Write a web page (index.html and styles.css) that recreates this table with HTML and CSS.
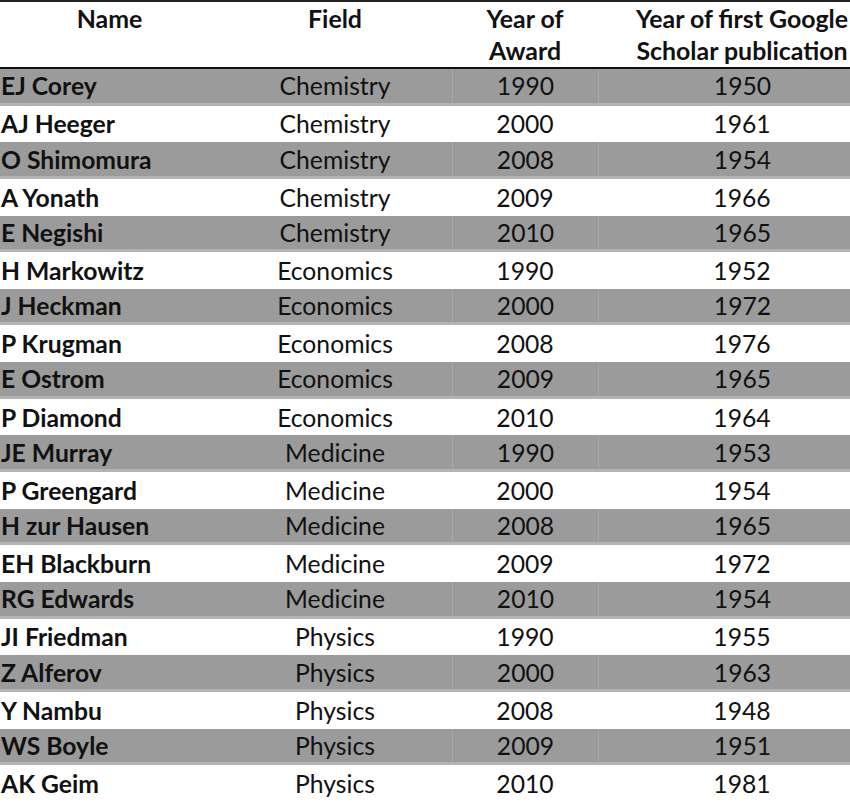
FILE: index.html
```html
<!DOCTYPE html>
<html>
<head>
<meta charset="utf-8">
<link rel="stylesheet" href="styles.css">
</head>
<body>
<div class="table">
  <div class="row head">
    <div class="c name">Name</div>
    <div class="c">Field</div>
    <div class="c">Year of<br>Award</div>
    <div class="c">Year of first Google<br>Scholar publication</div>
  </div>
  <div class="row g"><div class="c name">EJ Corey</div><div class="c">Chemistry</div><div class="c">1990</div><div class="c">1950</div></div>
  <div class="row"><div class="c name">AJ Heeger</div><div class="c">Chemistry</div><div class="c">2000</div><div class="c">1961</div></div>
  <div class="row g"><div class="c name">O Shimomura</div><div class="c">Chemistry</div><div class="c">2008</div><div class="c">1954</div></div>
  <div class="row"><div class="c name">A Yonath</div><div class="c">Chemistry</div><div class="c">2009</div><div class="c">1966</div></div>
  <div class="row g"><div class="c name">E Negishi</div><div class="c">Chemistry</div><div class="c">2010</div><div class="c">1965</div></div>
  <div class="row"><div class="c name">H Markowitz</div><div class="c">Economics</div><div class="c">1990</div><div class="c">1952</div></div>
  <div class="row g"><div class="c name">J Heckman</div><div class="c">Economics</div><div class="c">2000</div><div class="c">1972</div></div>
  <div class="row"><div class="c name">P Krugman</div><div class="c">Economics</div><div class="c">2008</div><div class="c">1976</div></div>
  <div class="row g"><div class="c name">E Ostrom</div><div class="c">Economics</div><div class="c">2009</div><div class="c">1965</div></div>
  <div class="row"><div class="c name">P Diamond</div><div class="c">Economics</div><div class="c">2010</div><div class="c">1964</div></div>
  <div class="row g"><div class="c name">JE Murray</div><div class="c">Medicine</div><div class="c">1990</div><div class="c">1953</div></div>
  <div class="row"><div class="c name">P Greengard</div><div class="c">Medicine</div><div class="c">2000</div><div class="c">1954</div></div>
  <div class="row g"><div class="c name">H zur Hausen</div><div class="c">Medicine</div><div class="c">2008</div><div class="c">1965</div></div>
  <div class="row"><div class="c name">EH Blackburn</div><div class="c">Medicine</div><div class="c">2009</div><div class="c">1972</div></div>
  <div class="row g"><div class="c name">RG Edwards</div><div class="c">Medicine</div><div class="c">2010</div><div class="c">1954</div></div>
  <div class="row"><div class="c name">JI Friedman</div><div class="c">Physics</div><div class="c">1990</div><div class="c">1955</div></div>
  <div class="row g"><div class="c name">Z Alferov</div><div class="c">Physics</div><div class="c">2000</div><div class="c">1963</div></div>
  <div class="row"><div class="c name">Y Nambu</div><div class="c">Physics</div><div class="c">2008</div><div class="c">1948</div></div>
  <div class="row g"><div class="c name">WS Boyle</div><div class="c">Physics</div><div class="c">2009</div><div class="c">1951</div></div>
  <div class="row"><div class="c name">AK Geim</div><div class="c">Physics</div><div class="c">2010</div><div class="c">1981</div></div>
</div>
</body>
</html>
```
FILE: styles.css
```css
html, body {
  margin: 0;
  padding: 0;
  background: #fff;
  overflow: hidden;
}
body {
  font-family: Lato, "Open Sans", sans-serif;
  font-size: 24.7px;
  color: #111;
}
.table {
  width: 886px;
  border-top: 2px solid #222;
}
.row {
  display: grid;
  grid-template-columns: 218px 234px 146px 288px;
  height: 36.65px;
  align-items: center;
  box-sizing: border-box;
}
.row.head {
  height: 67px;
  align-items: start;
  border-bottom: 2px solid #111;
  font-weight: bold;
  font-size: 24.9px;
  line-height: 32px;
}
.row.g {
  background: #9b9b9b;
  border-bottom: 3px solid #b3b3b3;
}
.row.g .c + .c + .c {
  border-left: 1px solid #a8a8a8;
}
.c {
  text-align: center;
  white-space: nowrap;
  height: 100%;
  display: flex;
  align-items: center;
  justify-content: center;
}
.head .c {
  display: block;
  height: auto;
}
.c.name {
  justify-content: flex-start;
  text-align: left;
  font-weight: bold;
  padding-left: 1px;
}
.head .c.name {
  text-align: center;
}
```
